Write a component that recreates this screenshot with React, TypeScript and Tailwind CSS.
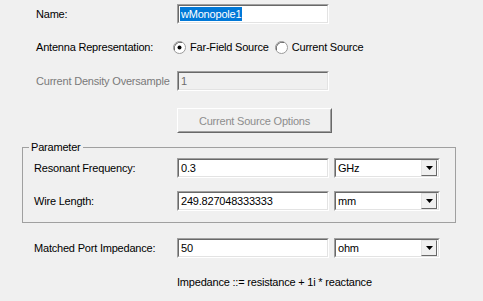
import React from 'react';

const Sunken = ({ className = '', children }: { className?: string; children?: React.ReactNode }) => (
  <div className={`border border-t-[#a0a0a0] border-l-[#a0a0a0] border-b-white border-r-white ${className}`}>
    <div className="h-full w-full border border-t-[#696969] border-l-[#696969] border-b-[#e3e3e3] border-r-[#e3e3e3]">
      {children}
    </div>
  </div>
);

const TextBox = ({ value, disabled = false, selected = false }: { value: string; disabled?: boolean; selected?: boolean }) => (
  <Sunken className="h-[20px] w-[152px]">
    <div className={`flex h-full items-center pl-[1px] ${disabled ? 'bg-[#f0f0f0] text-[#6d6d6d]' : 'bg-white text-black'}`}>
      {selected ? <span className="bg-[#0078d7] px-[1px] leading-[14px] text-white">{value}</span> : <span className="pl-[1px]">{value}</span>}
    </div>
  </Sunken>
);

const Select = ({ value }: { value: string }) => (
  <Sunken className="ml-[5px] h-[20px] w-[106px]">
    <div className="flex h-full items-center justify-between bg-white pl-[2px] pr-[1px]">
      <span>{value}</span>
      <div className="flex h-[16px] w-[16px] items-center justify-center border border-t-[#e3e3e3] border-l-[#e3e3e3] border-b-[#696969] border-r-[#696969] bg-[#f0f0f0]">
        <svg width="7" height="4" viewBox="0 0 7 4">
          <path d="M0 0h7L3.5 4z" fill="#000" />
        </svg>
      </div>
    </div>
  </Sunken>
);

const Radio = ({ checked }: { checked?: boolean }) => (
  <svg width="13" height="13" viewBox="0 0 13 13" className="mr-[4px]">
    <circle cx="6.5" cy="6.5" r="6" fill="#fff" stroke="#9a9a9a" />
    <path d="M1.5 9A6 6 0 0 1 9 1.5" fill="none" stroke="#6a6a6a" />
    {checked && <circle cx="6.5" cy="6.5" r="2" fill="#000" />}
  </svg>
);

const Row = ({ label, className = '', labelW = 'w-[141px] ml-[36px]', children }: { label: string; className?: string; labelW?: string; children?: React.ReactNode }) => (
  <div className={`flex h-[20px] items-center ${className}`}>
    <span className={`shrink-0 ${labelW}`}>{label}</span>
    {children}
  </div>
);

export default function App() {
  return (
    <div
      className="flex h-[301px] w-[483px] flex-col overflow-hidden bg-[#f0f0f0] pt-[4px] text-[11px] leading-[14px] tracking-[-0.2px] text-black"
      style={{ fontFamily: '"Liberation Sans", Arial, sans-serif' }}
    >
      <Row label="Name:">
        <TextBox value="wMonopole1" selected />
      </Row>

      <Row label="Antenna Representation:" className="mt-[13px]">
        <div className="ml-[-4px] flex items-center">
          <Radio checked />
          <span>Far-Field Source</span>
          <span className="ml-[6px]" />
          <Radio />
          <span>Current Source</span>
        </div>
      </Row>

      <Row label="Current Density Oversample" className="mt-[14px] text-[#7a7a7a]">
        <TextBox value="1" disabled />
      </Row>

      <div className="ml-[177px] mt-[17px] flex h-[25px] w-[155px] border border-t-white border-l-white border-b-[#696969] border-r-[#696969]">
        <div className="flex h-full w-full items-center justify-center border border-t-[#f0f0f0] border-l-[#f0f0f0] border-b-[#a0a0a0] border-r-[#a0a0a0] text-[#8d8d8d]">
          Current Source Options
        </div>
      </div>

      <fieldset className="ml-[22px] mt-[7px] w-[434px] border border-[#a0a0a0] pb-[11px] pl-[6px]">
        <legend className="px-[2px] leading-[14px]">Parameter</legend>
        <Row label="Resonant Frequency:" className="mt-[4px]" labelW="w-[143px] ml-[5px]">
          <TextBox value="0.3" />
          <Select value="GHz" />
        </Row>
        <Row label="Wire Length:" className="mt-[13px]" labelW="w-[143px] ml-[5px]">
          <TextBox value="249.827048333333" />
          <Select value="mm" />
        </Row>
      </fieldset>

      <Row label="Matched Port Impedance:" className="mt-[15px]" labelW="w-[143px] ml-[34px]">
        <TextBox value="50" />
        <Select value="ohm" />
      </Row>

      <div className="ml-[177px] mt-[17px]">Impedance ::= resistance + 1i * reactance</div>
    </div>
  );
}
